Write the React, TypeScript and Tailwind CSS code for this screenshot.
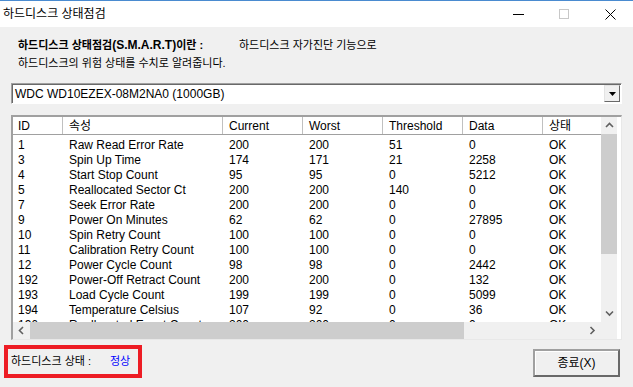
import React from 'react'

const rows = [
  ['1', 'Raw Read Error Rate', '200', '200', '51', '0', 'OK'],
  ['3', 'Spin Up Time', '174', '171', '21', '2258', 'OK'],
  ['4', 'Start Stop Count', '95', '95', '0', '5212', 'OK'],
  ['5', 'Reallocated Sector Ct', '200', '200', '140', '0', 'OK'],
  ['7', 'Seek Error Rate', '200', '200', '0', '0', 'OK'],
  ['9', 'Power On Minutes', '62', '62', '0', '27895', 'OK'],
  ['10', 'Spin Retry Count', '100', '100', '0', '0', 'OK'],
  ['11', 'Calibration Retry Count', '100', '100', '0', '0', 'OK'],
  ['12', 'Power Cycle Count', '98', '98', '0', '2442', 'OK'],
  ['192', 'Power-Off Retract Count', '200', '200', '0', '132', 'OK'],
  ['193', 'Load Cycle Count', '199', '199', '0', '5099', 'OK'],
  ['194', 'Temperature Celsius', '107', '92', '0', '36', 'OK'],
  ['196', 'Reallocated Event Count', '200', '200', '0', '0', 'OK'],
]

// column widths / text padding of the list view
const cols = [
  { w: 'w-[50px] pl-[5px]', label: 'ID' },
  { w: 'w-[160px] pl-[6px]', label: '속성' },
  { w: 'w-[80px] pl-[6px]', label: 'Current' },
  { w: 'w-[80px] pl-[6px]', label: 'Worst' },
  { w: 'w-[80px] pl-[6px]', label: 'Threshold' },
  { w: 'w-[80px] pl-[6px]', label: 'Data' },
  { w: 'w-[60px] pl-[6px]', label: '상태' },
]

function Chevron({ dir }: { dir: 'up' | 'down' | 'left' | 'right' }) {
  const pts = {
    up: '1,5 4.5,1.5 8,5',
    down: '1,1.5 4.5,5 8,1.5',
    left: '5,1 1.5,4.5 5,8',
    right: '1.5,1 5,4.5 1.5,8',
  }[dir]
  const vert = dir === 'up' || dir === 'down'
  return (
    <svg width={vert ? 9 : 7} height={vert ? 7 : 9} viewBox={vert ? '0 0 9 7' : '0 0 7 9'}>
      <polyline points={pts} fill="none" stroke="#606060" strokeWidth="1.6" />
    </svg>
  )
}

export default function App() {
  return (
    <div className="w-[633px] h-[387px] overflow-hidden bg-[#f0f0f0] text-black font-['Liberation_Sans','Noto_Sans_CJK_KR',sans-serif]">
      {/* title bar */}
      <div className="h-[27px] bg-white border-t border-[#4a8bd0] flex items-center">
        <span className="pl-[3px] text-[12px] flex-1">하드디스크 상태점검</span>
        <div className="w-[46px] h-full flex items-center justify-center">
          <div className="w-[11px] h-px bg-black" />
        </div>
        <div className="w-[46px] h-full flex items-center justify-center">
          <div className="w-[10px] h-[10px] border border-[#c8c8c8]" />
        </div>
        <div className="w-[46px] h-full flex items-center justify-center">
          <svg width="11" height="11" viewBox="0 0 11 11">
            <path d="M0.5 0.5 L10.5 10.5 M10.5 0.5 L0.5 10.5" stroke="#000" strokeWidth="1" />
          </svg>
        </div>
      </div>

      <div className="px-[11px]">
        {/* description */}
        <div className="mt-[9px] pl-[7px] text-[11px] leading-[18px]">
          <div className="flex">
            <span className="w-[221px] font-bold">
              하드디스크 상태점검<span className="text-[12px]">(S.M.A.R.T)</span>이란 :
            </span>
            <span>하드디스크 자가진단 기능으로</span>
          </div>
          <div>하드디스크의 위험 상태를 수치로 알려줍니다.</div>
        </div>

        {/* drive combo */}
        <div className="mt-[11px] h-[21px] bg-white flex border-t border-l border-[#a0a0a0] border-r border-b border-r-white border-b-white shadow-[inset_1px_1px_0_#696969]">
          <div className="flex-1 pl-[3px] text-[12px] leading-[19px] pt-px">WDC WD10EZEX-08M2NA0 (1000GB)</div>
          <div className="w-[16px] mt-px mb-px mr-px bg-[#f0f0f0] border-t border-l border-[#e3e3e3] border-r border-b border-r-[#696969] border-b-[#696969] flex items-center justify-center">
            <svg width="7" height="4" viewBox="0 0 7 4">
              <path d="M0 0 H7 L3.5 4 Z" fill="#000" />
            </svg>
          </div>
        </div>

        {/* S.M.A.R.T list */}
        <div className="mt-[11px] h-[225px] bg-white border-t-2 border-l-2 border-t-[#a0a0a0] border-l-[#a0a0a0] border-r border-b border-r-[#e8e8e8] border-b-[#e8e8e8] grid grid-cols-[588px_16px] grid-rows-[205px_17px]">
          <div className="overflow-hidden text-[12px]">
            <div className="h-[18px] flex border-b border-[#a0a0a0] bg-white">
              {cols.map((c, i) => (
                <div key={i} className={`${c.w} shrink-0 border-r border-[#c0c0c0] pt-px leading-[17px] whitespace-nowrap`}>
                  {c.label}
                </div>
              ))}
            </div>
            <div className="pt-[3px]">
              {rows.map((r, ri) => (
                <div key={ri} className="h-[15px] flex leading-[15px]">
                  {r.map((v, ci) => (
                    <div key={ci} className={`${cols[ci].w} shrink-0 whitespace-nowrap`}>
                      {v}
                    </div>
                  ))}
                </div>
              ))}
            </div>
          </div>

          {/* vertical scrollbar */}
          <div className="bg-[#f0f0f0] flex flex-col">
            <div className="h-[17px] flex items-center justify-center"><Chevron dir="up" /></div>
            <div className="h-[120px] bg-[#cdcdcd]" />
            <div className="flex-1" />
            <div className="h-[17px] flex items-center justify-center"><Chevron dir="down" /></div>
          </div>

          {/* horizontal scrollbar */}
          <div className="bg-[#f0f0f0] flex">
            <div className="w-[17px] flex items-center justify-center"><Chevron dir="left" /></div>
            <div className="w-[434px] bg-[#cdcdcd]" />
            <div className="flex-1" />
            <div className="w-[17px] flex items-center justify-center"><Chevron dir="right" /></div>
          </div>
          <div className="bg-[#f0f0f0]" />
        </div>
      </div>

      {/* footer */}
      <div className="mt-[5px] pl-[4px] pr-[13px] flex justify-between items-start">
        <div className="w-[138px] h-[33px] border-4 border-[#ed1c24] flex items-center pl-[3px] text-[11px]">
          <span className="w-[99px] shrink-0">하드디스크 상태 :</span>
          <span className="text-[#0000ff]">정상</span>
        </div>
        <button className="mt-[4px] w-[87px] h-[28px] bg-[#f0f0f0] border-t-2 border-l-2 border-t-[#a0a0a0] border-l-[#a0a0a0] border-r-2 border-b-2 border-r-[#696969] border-b-[#696969] shadow-[inset_1px_1px_0_#fff] text-[12px]">
          종료(X)
        </button>
      </div>
    </div>
  )
}
